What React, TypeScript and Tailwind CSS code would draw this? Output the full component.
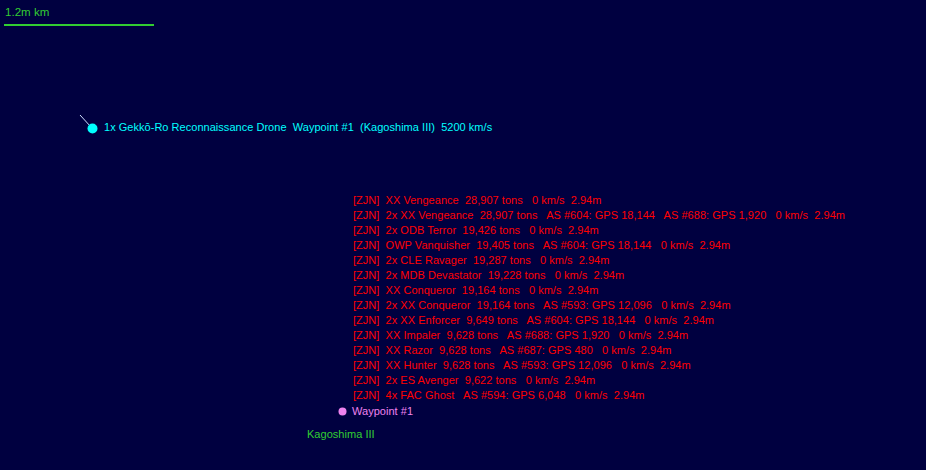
import React from "react";

const rows = [
  "[ZJN]  XX Vengeance  28,907 tons   0 km/s  2.94m",
  "[ZJN]  2x XX Vengeance  28,907 tons   AS #604: GPS 18,144   AS #688: GPS 1,920   0 km/s  2.94m",
  "[ZJN]  2x ODB Terror  19,426 tons   0 km/s  2.94m",
  "[ZJN]  OWP Vanquisher  19,405 tons   AS #604: GPS 18,144   0 km/s  2.94m",
  "[ZJN]  2x CLE Ravager  19,287 tons   0 km/s  2.94m",
  "[ZJN]  2x MDB Devastator  19,228 tons   0 km/s  2.94m",
  "[ZJN]  XX Conqueror  19,164 tons   0 km/s  2.94m",
  "[ZJN]  2x XX Conqueror  19,164 tons   AS #593: GPS 12,096   0 km/s  2.94m",
  "[ZJN]  2x XX Enforcer  9,649 tons   AS #604: GPS 18,144   0 km/s  2.94m",
  "[ZJN]  XX Impaler  9,628 tons   AS #688: GPS 1,920   0 km/s  2.94m",
  "[ZJN]  XX Razor  9,628 tons   AS #687: GPS 480   0 km/s  2.94m",
  "[ZJN]  XX Hunter  9,628 tons   AS #593: GPS 12,096   0 km/s  2.94m",
  "[ZJN]  2x ES Avenger  9,622 tons   0 km/s  2.94m",
  "[ZJN]  4x FAC Ghost   AS #594: GPS 6,048   0 km/s  2.94m",
];

export default function App() {
  return (
    <div
      className="relative w-[926px] h-[470px] overflow-hidden bg-[#000040] text-[11px] leading-[15px] whitespace-pre tracking-[0.03px]"
      style={{ fontFamily: '"Liberation Sans", Arial, sans-serif' }}
    >
      {/* scale */}
      <div className="absolute left-[5px] top-[4px] text-[11.5px] leading-[16px] text-[#32cd32]">1.2m km</div>
      <div className="absolute left-[4px] top-[24px] w-[150px] h-[2px] bg-[#32cd32]" />

      {/* drone and waypoint markers */}
      <svg className="absolute left-0 top-0" width="926" height="470">
        <line x1="80" y1="115" x2="91" y2="127" stroke="#d0e0ff" strokeWidth="1" />
        <circle cx="92.5" cy="128.5" r="5" fill="#00ffff" />
        <circle cx="342.5" cy="411.5" r="4" fill="#ee82ee" />
      </svg>
      <div className="absolute left-[104px] top-[120px] text-[#00ffff]">
        1x Gekkō-Ro Reconnaissance Drone  Waypoint #1  (Kagoshima III)  5200 km/s
      </div>

      {/* fleet list */}
      <div className="absolute left-[353px] top-[193px] flex flex-col text-[#ff0000]">
        {rows.map((r, i) => (
          <div key={i}>{r}</div>
        ))}
      </div>

      <div className="absolute left-[352px] top-[404px] text-[#ee82ee]">Waypoint #1</div>
      <div className="absolute left-[307px] top-[427px] text-[#32cd32]">Kagoshima III</div>
    </div>
  );
}
